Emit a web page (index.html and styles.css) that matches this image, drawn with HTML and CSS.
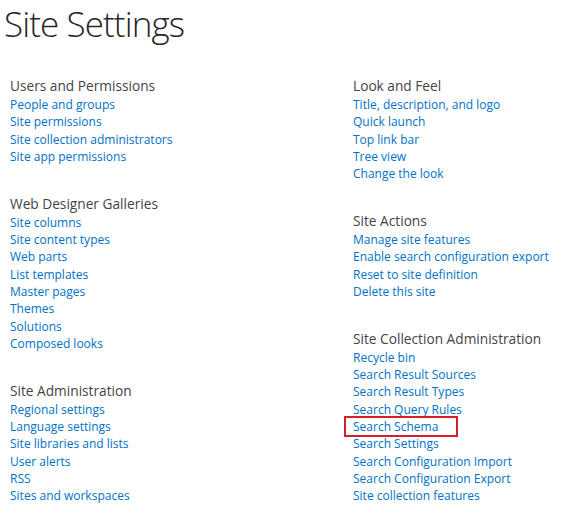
FILE: index.html
```html
<!DOCTYPE html>
<html>
<head>
<meta charset="utf-8">
<link rel="stylesheet" href="styles.css">
</head>
<body>
<h1 class="title">Site Settings</h1>
<div class="columns">
  <div class="col">
    <div class="group">
      <h2 class="heading">Users and Permissions</h2>
      <a class="link" href="#">People and groups</a>
      <a class="link" href="#">Site permissions</a>
      <a class="link" href="#">Site collection administrators</a>
      <a class="link" href="#">Site app permissions</a>
    </div>
    <div class="group">
      <h2 class="heading">Web Designer Galleries</h2>
      <a class="link" href="#">Site columns</a>
      <a class="link" href="#">Site content types</a>
      <a class="link" href="#">Web parts</a>
      <a class="link" href="#">List templates</a>
      <a class="link" href="#">Master pages</a>
      <a class="link" href="#">Themes</a>
      <a class="link" href="#">Solutions</a>
      <a class="link" href="#">Composed looks</a>
    </div>
    <div class="group">
      <h2 class="heading">Site Administration</h2>
      <a class="link" href="#">Regional settings</a>
      <a class="link" href="#">Language settings</a>
      <a class="link" href="#">Site libraries and lists</a>
      <a class="link" href="#">User alerts</a>
      <a class="link" href="#">RSS</a>
      <a class="link" href="#">Sites and workspaces</a>
    </div>
  </div>
  <div class="col">
    <div class="group">
      <h2 class="heading">Look and Feel</h2>
      <a class="link" href="#">Title, description, and logo</a>
      <a class="link" href="#">Quick launch</a>
      <a class="link" href="#">Top link bar</a>
      <a class="link" href="#">Tree view</a>
      <a class="link" href="#">Change the look</a>
    </div>
    <div class="group">
      <h2 class="heading">Site Actions</h2>
      <a class="link" href="#">Manage site features</a>
      <a class="link" href="#">Enable search configuration export</a>
      <a class="link" href="#">Reset to site definition</a>
      <a class="link" href="#">Delete this site</a>
    </div>
    <div class="group">
      <h2 class="heading">Site Collection Administration</h2>
      <a class="link" href="#">Recycle bin</a>
      <a class="link" href="#">Search Result Sources</a>
      <a class="link" href="#">Search Result Types</a>
      <a class="link" href="#">Search Query Rules</a>
      <a class="link highlighted" href="#">Search Schema</a>
      <a class="link" href="#">Search Settings</a>
      <a class="link" href="#">Search Configuration Import</a>
      <a class="link" href="#">Search Configuration Export</a>
      <a class="link" href="#">Site collection features</a>
    </div>
  </div>
</div>
</body>
</html>
```
FILE: styles.css
```css
html, body {
  margin: 0;
  padding: 0;
  background: #ffffff;
}
body {
  font-family: "Open Sans", "Noto Sans", sans-serif;
  overflow: hidden;
}
.title {
  margin: 0;
  padding: 0 0 0 4px;
  height: 76px;
  font-size: 35px;
  line-height: 48px;
  font-weight: 300;
  color: #262626;
  letter-spacing: -0.9px;
}
.columns {
  display: grid;
  grid-template-columns: 343px 1fr;
  padding-left: 10px;
}
.col {
  display: flex;
  flex-direction: column;
  gap: 28.33px;
}
.group {
  display: flex;
  flex-direction: column;
  align-items: flex-start;
}
.heading {
  margin: 0;
  font-size: 13.7px;
  line-height: 20px;
  font-weight: 400;
  color: #444444;
}
.link {
  font-size: 12px;
  line-height: 17.33px;
  color: #0072c6;
  text-decoration: none;
}
.highlighted {
  outline: 2px solid #d71f28;
  outline-offset: 0;
  margin-left: -7px;
  padding-left: 7px;
  padding-right: 18px;
}
```
